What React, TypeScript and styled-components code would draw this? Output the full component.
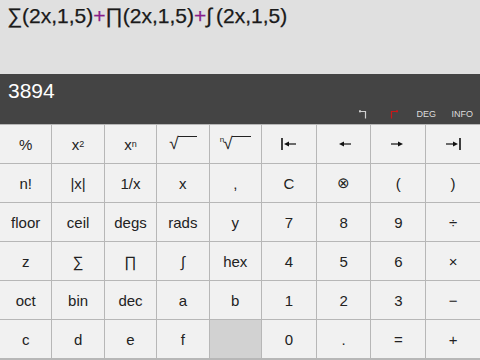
import React from 'react';
import styled, { createGlobalStyle } from 'styled-components';

const Global = createGlobalStyle`
    html, body {
        margin: 0;
        padding: 0;
        background: #f0f0f0;
        font-family: "Liberation Sans", Arial, Helvetica, sans-serif;
    }
`

const Screen = styled.div`
    width: 480px;
    height: 360px;
    display: flex;
    flex-direction: column;
    overflow: hidden;
`
const Expression = styled.div`
    height: 74px;
    box-sizing: border-box;
    background: #e0e0e0;
    padding: 4px 0 0 7px;
    font-size: 21px;
    color: #1a1a1a;
    -webkit-text-stroke: 0.25px #1a1a1a;
`
const Plus = styled.span`
    color: #8a1c8a;
    -webkit-text-stroke: 0.25px #8a1c8a;
`
const IntegralGap = styled.span`
    margin-right: 4px;
`
const Display = styled.div`
    height: 50px;
    box-sizing: border-box;
    background: #444444;
    display: flex;
    flex-direction: column;
    justify-content: space-between;
    padding: 4px 7px 4px 8px;
`
const Result = styled.div`
    color: #ffffff;
    font-size: 21px;
    line-height: 25px;
`
const Modes = styled.div`
    display: flex;
    justify-content: flex-end;
    align-items: center;
    height: 12px;
`
const ModeItem = styled.div<{ $w: number }>`
    width: ${p => p.$w}px;
    display: flex;
    justify-content: flex-end;
    color: #dcdcdc;
    font-size: 9px;
`
const Keypad = styled.div`
    flex: 1;
    display: grid;
    grid-template-columns: repeat(5, 51.4px) repeat(4, 1fr);
    grid-template-rows: repeat(6, 38px);
    gap: 1px;
    background: #b7b7b7;
    border-top: 1px solid #b7b7b7;
`
const Key = styled.div<{ $blank?: boolean }>`
    background: ${p => (p.$blank ? '#d2d2d2' : '#f1f1f1')};
    display: flex;
    align-items: center;
    justify-content: center;
    font-size: 15px;
    color: #222222;
`
const Root = styled.span`
    display: inline-flex;
    align-items: flex-start;
    font-size: 17px;
    line-height: 20px;
`
const RootIndex = styled.span`
    font-size: 8px;
    line-height: 8px;
    margin-top: 2px;
    margin-right: -1px;
`
const Radicand = styled.span`
    display: inline-block;
    width: 19px;
    height: 14px;
    border-top: 1px solid #222;
    margin-top: 2px;
    margin-left: -1px;
`
const Sup = styled.sup`
    font-size: 9px;
    vertical-align: 6px;
    line-height: 0;
`

const Corner = ({ red }: { red?: boolean }) => (
    <svg width="10" height="10" viewBox="0 0 10 10">
        {red ? (
            <g fill="none" stroke="#c81818" strokeWidth="1.2">
                <path d="M2.5 9.5 V2.5 H7.5" />
                <rect x="7" y="1.3" width="2" height="2" fill="#c81818" stroke="none" />
            </g>
        ) : (
            <g fill="none" stroke="#d0d0d0" strokeWidth="1.2">
                <path d="M2.5 2.5 H7.5 V9.5" />
                <rect x="1" y="1.3" width="2" height="2" fill="#d0d0d0" stroke="none" />
            </g>
        )}
    </svg>
)

const Arrow = ({ dir, bar }: { dir: 'left' | 'right'; bar?: boolean }) => (
    <svg width="16" height="14" viewBox="0 0 16 14">
        {dir === 'left' ? (
            <g fill="#111" stroke="#111">
                <path d="M5 7 H15" strokeWidth="1.2" />
                <path d="M3 7 L8 4.5 L8 9.5 Z" stroke="none" />
                {bar && <path d="M1 1 V13" strokeWidth="1.6" />}
            </g>
        ) : (
            <g fill="#111" stroke="#111">
                <path d="M1 7 H11" strokeWidth="1.2" />
                <path d="M13 7 L8 4.5 L8 9.5 Z" stroke="none" />
                {bar && <path d="M15 1 V13" strokeWidth="1.6" />}
            </g>
        )}
    </svg>
)

type KeyDef = React.ReactNode

const keys: KeyDef[] = [
    '%',
    <>x<Sup>2</Sup></>,
    <>x<Sup>n</Sup></>,
    <Root>√<Radicand /></Root>,
    <Root><RootIndex>n</RootIndex>√<Radicand /></Root>,
    <Arrow dir="left" bar />,
    <Arrow dir="left" />,
    <Arrow dir="right" />,
    <Arrow dir="right" bar />,
    'n!', '|x|', '1/x', 'x', ',', 'C', '⊗', '(', ')',
    'floor', 'ceil', 'degs', 'rads', 'y', '7', '8', '9', '÷',
    'z', '∑', '∏', '∫', 'hex', '4', '5', '6', '×',
    'oct', 'bin', 'dec', 'a', 'b', '1', '2', '3', '−',
    'c', 'd', 'e', 'f', null, '0', '.', '=', '+',
]

const App = (): JSX.Element => {
    return (
        <Screen>
            <Global />
            <Expression>
                ∑(2x,1,5)<Plus>+</Plus>∏(2x,1,5)<Plus>+</Plus><IntegralGap>∫</IntegralGap>(2x,1,5)
            </Expression>
            <Display>
                <Result>3894</Result>
                <Modes>
                    <ModeItem $w={12}><Corner /></ModeItem>
                    <ModeItem $w={31}><Corner red /></ModeItem>
                    <ModeItem $w={37}>DEG</ModeItem>
                    <ModeItem $w={37}>INFO</ModeItem>
                </Modes>
            </Display>
            <Keypad>
                {keys.map((k, i) => (
                    <Key key={i} $blank={k === null}>{k}</Key>
                ))}
            </Keypad>
        </Screen>
    )
}
export default App;
